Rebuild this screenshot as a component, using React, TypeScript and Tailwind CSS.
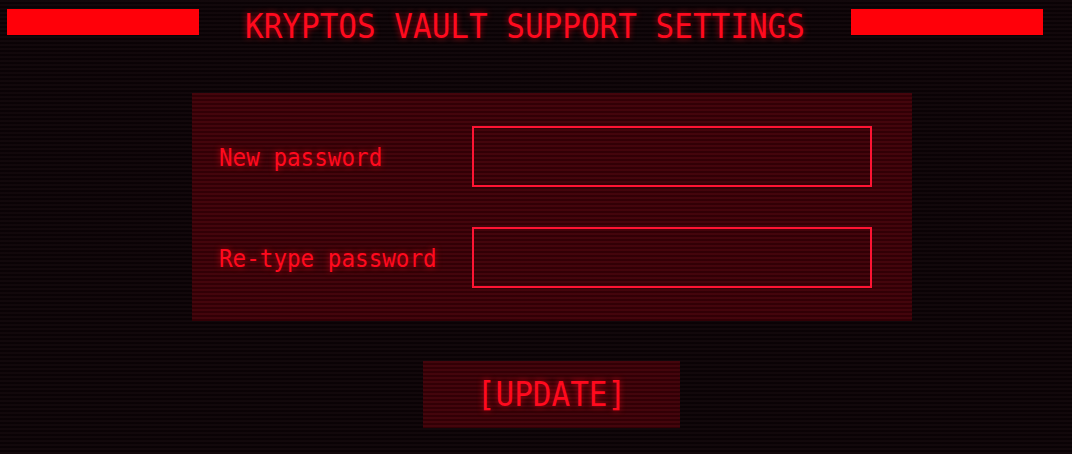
import React from "react";

const scan =
  "bg-[repeating-linear-gradient(to_bottom,rgba(255,255,255,0.02)_0px,rgba(255,255,255,0.02)_2px,rgba(0,0,0,0.22)_2px,rgba(0,0,0,0.22)_4px)]";

const glow = "[text-shadow:0_0_6px_rgba(255,0,20,0.65)]";

function Field({ label }: { label: string }) {
  return (
    <div className="flex items-center h-[61px]">
      <label className={`w-[253px] pt-[2px] text-[22.6px] leading-none text-[#ff0a1e] ${glow}`}>
        <span className="inline-block scale-y-[1.09]">{label}</span>
      </label>
      <input
        type="password"
        className="w-[400px] h-[61px] border-2 border-[#ff1433] bg-transparent outline-none"
      />
    </div>
  );
}

export default function App() {
  return (
    <div
      className={`min-h-screen w-full bg-[#0d0306] ${scan}`}
      style={{ fontFamily: '"DejaVu Sans Mono", "Liberation Mono", monospace' }}
    >
      <div className="flex flex-col">
        <div className="flex items-start h-[35px] pl-[7px] pt-[9px] gap-[46px]">
          <div className="w-[192px] h-[26px] bg-[#ff0009]" />
          <h1 className={`mt-[4px] text-[31px] leading-[26px] text-[#ff0a1e] ${glow}`}>
            <span className="inline-block scale-y-[1.07]">KRYPTOS VAULT SUPPORT SETTINGS</span>
          </h1>
          <div className="w-[192px] h-[26px] bg-[#ff0009]" />
        </div>

        <div
          className={`ml-[192px] mt-[58px] w-[720px] h-[228px] bg-[#400007] ${scan} flex flex-col justify-center gap-[40px] pl-[27px]`}
        >
          <Field label="New password" />
          <Field label="Re-type password" />
        </div>

        <button
          className={`ml-[423px] mt-[40px] w-[257px] h-[67px] bg-[#400007] ${scan} text-[31px] text-[#ff0a1e] ${glow}`}
        >
          <span className="inline-block scale-y-[1.07]">[UPDATE]</span>
        </button>
      </div>
    </div>
  );
}
